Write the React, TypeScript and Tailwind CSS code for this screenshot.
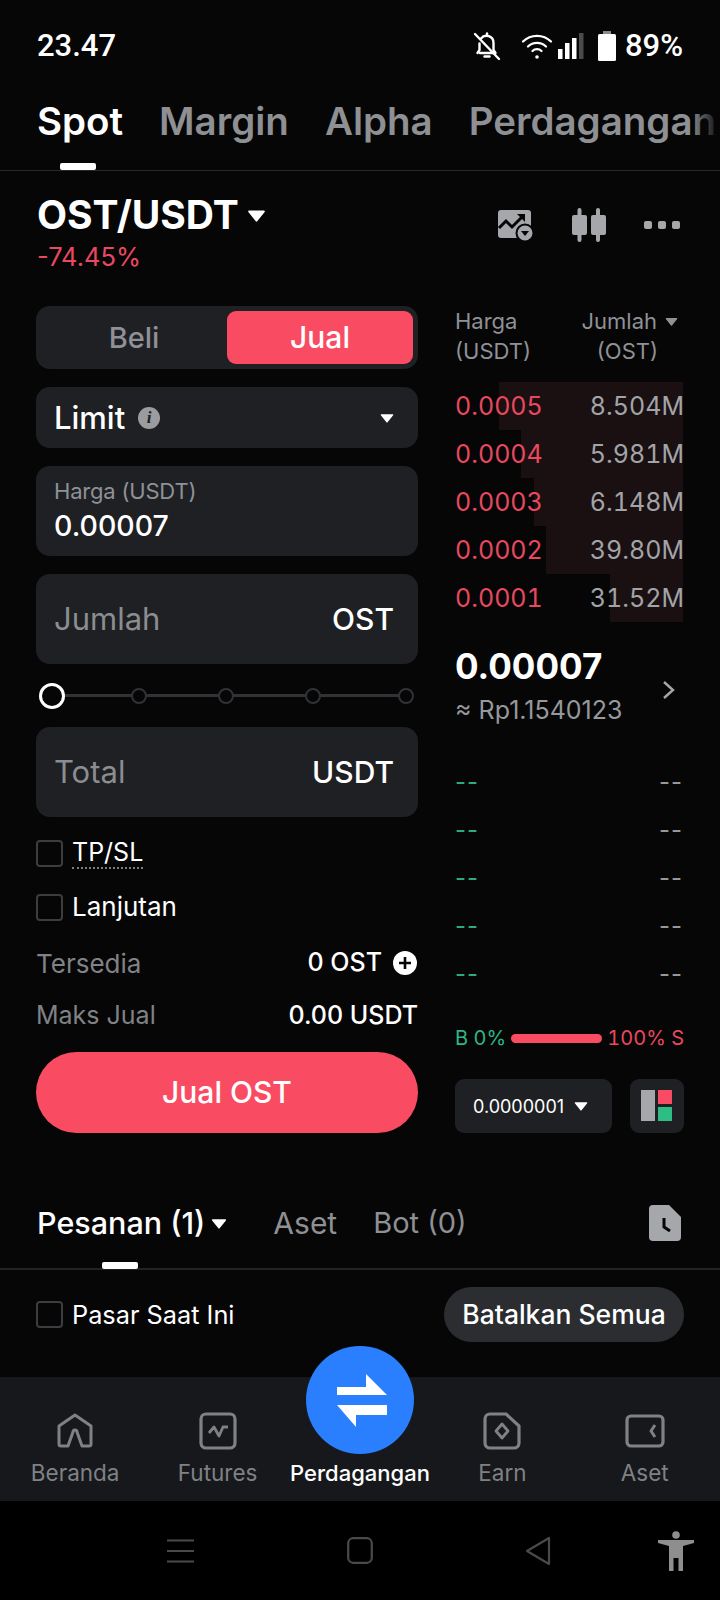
import React from "react";

const Caret = ({ className }: { className: string }) => (
  <svg viewBox="0 0 20 14" className={className} fill="currentColor"><path d="M2 1.5h16a1 1 0 0 1 .8 1.6l-8 10a1 1 0 0 1-1.6 0l-8-10A1 1 0 0 1 2 1.5z" /></svg>
);

const Field = ({ label, unit }: { label: string; unit: string }) => (
  <div className="h-[90px] rounded-[14px] bg-[#1e2024] flex items-center justify-between pl-[18px] pr-6">
    <span className="text-[31px] text-[#8b8d90]">{label}</span>
    <span className="text-[30px] font-medium text-white">{unit}</span>
  </div>
);

const Check = ({ className = "" }: { className?: string }) => (
  <span className={`block w-[27px] h-[27px] rounded-[4px] border-2 border-[#3b3d41] shrink-0 ${className}`} />
);

const asks: [string, string, string][] = [
  ["0.0005", "8.504M", "w-[184px]"],
  ["0.0004", "5.981M", "w-[162px]"],
  ["0.0003", "6.148M", "w-[149px]"],
  ["0.0002", "39.80M", "w-[137px]"],
  ["0.0001", "31.52M", "w-[73px]"],
];

const NavItem = ({ label, icon, active }: { label: string; icon?: React.ReactNode; active?: boolean }) => (
  <div className="flex flex-col items-center">
    <div className="h-[40px] flex items-center justify-center">{icon}</div>
    <span className={`mt-[7px] leading-[30px] whitespace-nowrap ${active ? "text-[22px] text-white font-medium" : "text-[22.5px] text-[#7f8185]"}`}>{label}</span>
  </div>
);

export default function App() {
  return (
    <div className="relative w-[720px] h-[1600px] overflow-hidden bg-[#060607] text-white flex flex-col" style={{ fontFamily: "Inter, 'Liberation Sans', sans-serif" }}>
      {/* status bar */}
      <div className="h-[92px] shrink-0 flex items-center justify-between pl-[37px] pr-[37px]" style={{ fontFamily: "Roboto, sans-serif" }}>
        <span className="text-[31px] font-medium">23.47</span>
        <div className="flex items-center">
          <svg viewBox="0 0 30 30" className="w-[30px] h-[30px] mr-[19px]" fill="none" stroke="white" strokeWidth="2.4" strokeLinecap="round" strokeLinejoin="round">
            <path d="M9 7.5A7 7 0 0 1 21.5 12v7l2 3H8" /><path d="M7.5 12.5V19l-2 3" /><path d="M12.5 25.5h5" /><path d="M15 2.5v2" /><path d="M3 3l24 25" />
          </svg>
          <svg viewBox="0 0 32 28" className="w-[32px] h-[28px]" fill="none" stroke="white" strokeWidth="2.3" strokeLinecap="round">
            <path d="M2 9.5a20 20 0 0 1 28 0" /><path d="M7 14.5a13 13 0 0 1 18 0" /><path d="M11.5 19a6.5 6.5 0 0 1 9 0" /><circle cx="16" cy="25" r="1.8" fill="white" stroke="none" />
          </svg>
          <svg viewBox="0 0 26 28" className="w-[26px] h-[28px] ml-[5px]">
            <rect x="0" y="17" width="4.5" height="10" fill="white" /><rect x="7" y="11" width="4.5" height="16" fill="white" /><rect x="14" y="6" width="4.5" height="21" fill="white" /><rect x="21" y="1" width="4.5" height="26" fill="#4b4b4b" />
          </svg>
          <svg viewBox="0 0 18 30" className="w-[18px] h-[30px] ml-[14px]">
            <rect x="5" y="0" width="8" height="3" fill="#8a8a8a" /><rect x="0" y="3" width="18" height="27" rx="1.5" fill="white" />
          </svg>
          <span className="text-[31px] font-medium ml-[9px]">89%</span>
        </div>
      </div>

      {/* top tabs */}
      <div className="relative h-[79px] shrink-0 border-b border-[#26282b] flex items-start pl-[37px] overflow-hidden">
        <div className="flex items-center gap-[36px] h-[60px] text-[38.5px] font-semibold whitespace-nowrap">
          <span>Spot</span>
          <span className="text-[#8e9093]">Margin</span>
          <span className="text-[#8e9093]">Alpha</span>
          <span className="text-[#8e9093]">Perdagangan</span>
        </div>
        <div className="absolute left-[60px] bottom-0 w-[36px] h-[7px] rounded-[2px] bg-white" />
        <div className="absolute right-0 top-0 bottom-0 w-[30px] bg-gradient-to-r from-transparent to-[#060607]" />
      </div>

      {/* pair */}
      <div className="h-[110px] shrink-0 flex justify-between pl-[37px] pr-[40px] pt-[20px]">
        <div>
          <div className="flex items-center h-[48px]">
            <span className="text-[39px] font-bold">OST/USDT</span>
            <Caret className="w-[19px] h-[13px] ml-[8px] text-white" />
          </div>
          <div className="text-[25.5px] leading-[30px] mt-[3px] text-[#e9485f]">-74.45%</div>
        </div>
        <div className="flex items-center h-[68px] text-[#a5a7ab]">
          <svg viewBox="0 0 38 32" className="w-[38px] h-[32px]">
            <rect x="1" y="1" width="33" height="28" rx="3" fill="#a5a7ab" />
            <path d="M2 19l7-7 6 6 10-10" fill="none" stroke="#060607" strokeWidth="3" />
            <path d="M20 5h8v8z" fill="#060607" />
            <circle cx="28" cy="24" r="8.5" fill="#a5a7ab" stroke="#060607" strokeWidth="2" />
            <path d="M24 22h8l-4 5z" fill="#060607" />
          </svg>
          <svg viewBox="0 0 36 36" className="w-[36px] h-[36px] ml-[36px]" fill="#a5a7ab">
            <rect x="6.5" y="1" width="4" height="34" rx="2" /><rect x="1" y="8" width="15" height="20" rx="2" />
            <rect x="25" y="1" width="4" height="34" rx="2" /><rect x="20" y="8" width="15" height="20" rx="2" />
          </svg>
          <svg viewBox="0 0 36 8" className="w-[36px] h-[8px] ml-[37px]" fill="#a5a7ab">
            <rect x="0" y="0" width="8" height="8" rx="2" /><rect x="14" y="0" width="8" height="8" rx="2" /><rect x="28" y="0" width="8" height="8" rx="2" />
          </svg>
        </div>
      </div>

      {/* trade area */}
      <div className="h-[904px] shrink-0 flex pl-[36px] pr-[36px] pt-[25px]">
        {/* form */}
        <div className="w-[382px] shrink-0 flex flex-col">
          <div className="h-[63px] rounded-[14px] bg-[#1e2024] flex p-[5px]">
            <div className="flex-1 flex items-center justify-center text-[29px] font-medium text-[#8f9196]">Beli</div>
            <div className="w-[186px] rounded-[9px] bg-[#f94c63] flex items-center justify-center text-[30px] font-medium">Jual</div>
          </div>
          <div className="mt-[18px] h-[61px] rounded-[14px] bg-[#1e2024] flex items-center pl-[18px] pr-[24px]">
            <span className="text-[31px] font-medium pt-[2px]">Limit</span>
            <span className="ml-[13px] w-[22px] h-[22px] rounded-full bg-[#9a9ca0] flex items-center justify-center text-[17px] font-bold italic leading-none text-[#1e2024]" style={{ fontFamily: "'Liberation Serif', serif" }}>i</span>
            <Caret className="ml-auto w-[14px] h-[10px] text-white" />
          </div>
          <div className="mt-[18px] h-[90px] rounded-[14px] bg-[#1e2024] pl-[18px] pt-[11px]">
            <div className="text-[22px] tracking-[-0.2px] leading-[28px] text-[#8f9196]">Harga (USDT)</div>
            <div className="text-[28.5px] leading-[36px] mt-[3px] font-medium">0.00007</div>
          </div>
          <div className="mt-[18px]"><Field label="Jumlah" unit="OST" /></div>
          <div className="relative h-[63px] flex items-center">
            <div className="absolute left-[16px] right-[8px] h-[3px] bg-[#303236]" />
            <div className="relative w-full h-[26px]">
              <span className="absolute left-[3px] top-0 w-[26px] h-[26px] rounded-full border-[3px] border-white bg-[#060607]" />
              {["left-[95px]", "left-[182px]", "left-[269px]", "left-[362px]"].map((l) => (
                <span key={l} className={`absolute ${l} top-[5px] w-[16px] h-[16px] rounded-full border-2 border-[#303236] bg-[#060607]`} />
              ))}
            </div>
          </div>
          <Field label="Total" unit="USDT" />
          <div className="mt-[23px] h-[27px] flex items-center">
            <Check />
            <span className="ml-[9px] text-[25px] leading-[30px] border-b-2 border-dotted border-[#7d7f83] -mt-[1px]">TP/SL</span>
          </div>
          <div className="mt-[27px] h-[27px] flex items-center">
            <Check />
            <span className="ml-[9px] text-[26px] leading-[30px] -mt-[1px]">Lanjutan</span>
          </div>
          <div className="mt-[27px] h-[30px] flex items-center justify-between">
            <span className="text-[26px] text-[#808286]">Tersedia</span>
            <span className="flex items-center font-medium text-[25px]">0 OST
              <svg viewBox="0 0 24 24" className="w-[24px] h-[24px] ml-[11px] mr-[1px]"><circle cx="12" cy="12" r="12" fill="white" /><path d="M12 6v12M6 12h12" stroke="#060607" strokeWidth="2.6" /></svg>
            </span>
          </div>
          <div className="mt-[23px] h-[30px] flex items-center justify-between">
            <span className="text-[25px] text-[#808286]">Maks Jual</span>
            <span className="font-medium text-[25px]">0.00 USDT</span>
          </div>
          <div className="mt-[21px] h-[81px] rounded-full bg-[#f94c63] flex items-center justify-center text-[30px] font-medium">Jual OST</div>
        </div>

        {/* order book */}
        <div className="ml-[37px] flex-1 flex flex-col min-w-0">
          <div className="flex justify-between text-[22px] leading-[30px] text-[#8f9196] h-[76px]">
            <div>Harga<br />(USDT)</div>
            <div className="flex flex-col items-end pr-[6px]">
              <div className="flex items-center">Jumlah<Caret className="ml-[8px] w-[13px] h-[9px] text-[#8f9196]" /></div>
              <div className="pr-[20px]">(OST)</div>
            </div>
          </div>
          <div className="flex flex-col">
            {asks.map(([p, q, w]) => (
              <div key={p} className="relative h-[48px] flex items-center justify-between text-[25px] tabular-nums">
                <div className={`absolute right-[1px] inset-y-0 ${w} bg-[#1a1012]`} />
                <span className="relative text-[#e9485f] pt-[1px]">{p}</span>
                <span className="relative text-[#a2a4a8] pt-[1px]">{q}</span>
              </div>
            ))}
          </div>
          <div className="mt-[22px] flex items-start justify-between h-[81px]">
            <div>
              <div className="text-[35px] leading-[44px] font-bold">0.00007</div>
              <div className="text-[25px] leading-[30px] mt-[7px] text-[#96989c] whitespace-nowrap">≈ Rp1.1540123</div>
            </div>
            <svg viewBox="0 0 14 20" className="w-[14px] h-[20px] mr-[8px] mt-[36px]" fill="none" stroke="#a5a7ab" strokeWidth="2.4"><path d="M2 2l9 8-9 8" /></svg>
          </div>
          <div className="mt-[33px] flex flex-col">
            {[0, 1, 2, 3, 4].map((i) => (
              <div key={i} className="h-[48px] flex items-center justify-between text-[24px]">
                <span className="text-[#2fa97f] tracking-[1px]">--</span>
                <span className="text-[#96989c] tracking-[1px] pr-[1px]">--</span>
              </div>
            ))}
          </div>
          <div className="mt-[25px] h-[30px] flex items-center text-[20px] whitespace-nowrap tabular-nums">
            <span className="text-[#2fb486]">B 0%</span>
            <span className="flex-1 h-[9px] mx-[5px] rounded-full bg-[#f94c63]" />
            <span className="text-[#e9485f]">100% S</span>
          </div>
          <div className="mt-[26px] flex justify-between">
            <div className="w-[157px] h-[54px] rounded-[9px] bg-[#1e2024] flex items-center pl-[18px] text-[18px]">
              0.0000001
              <Caret className="ml-[10px] w-[14px] h-[10px] text-white" />
            </div>
            <div className="w-[54px] h-[54px] rounded-[9px] bg-[#1e2024] flex items-center justify-center">
              <svg viewBox="0 0 32 32" className="w-[32px] h-[32px]">
                <rect x="0" y="0" width="14" height="31" fill="#a5a7ab" /><rect x="17" y="0" width="14" height="14" fill="#f94c63" /><rect x="17" y="17" width="14" height="14" fill="#2ebd85" />
              </svg>
            </div>
          </div>
        </div>
      </div>

      {/* orders tabs */}
      <div className="relative h-[85px] shrink-0 border-b-2 border-[#202225] flex items-start pl-[37px] pr-[39px] pt-[16px]">
        <div className="flex items-center h-[44px]">
          <span className="font-medium text-[30.5px]">Pesanan (1)</span>
          <Caret className="ml-[6px] w-[16px] h-[11px] text-white" />
          <span className="ml-[46px] text-[30px] text-[#8e9093]">Aset</span>
          <span className="ml-[36px] text-[29px] text-[#8e9093]">Bot (0)</span>
        </div>
        <svg viewBox="0 0 32 36" className="ml-auto mt-[4px] w-[32px] h-[36px]">
          <path d="M4 0h16l12 12v20a4 4 0 0 1-4 4H4a4 4 0 0 1-4-4V4a4 4 0 0 1 4-4z" fill="#a5a7ab" />
          <path d="M15 13v9l6 4" fill="none" stroke="#060607" strokeWidth="3" />
        </svg>
        <div className="absolute left-[102px] -bottom-[1px] w-[36px] h-[7px] rounded-[2px] bg-white" />
      </div>

      {/* current-market row */}
      <div className="h-[107px] shrink-0 flex items-start justify-between pl-[36px] pr-[36px] pt-[17px]">
        <div className="flex items-center h-[55px]">
          <Check />
          <span className="ml-[9px] text-[25.3px]">Pasar Saat Ini</span>
        </div>
        <div className="w-[240px] h-[55px] rounded-full bg-[#2b2d31] flex items-center justify-center text-[26.5px] font-medium whitespace-nowrap">Batalkan Semua</div>
      </div>

      {/* tab bar */}
      <div className="relative h-[124px] shrink-0 bg-[#16181b] grid grid-cols-5 px-1 pt-[34px]">
        <NavItem label="Beranda" icon={
          <svg viewBox="0 0 36 36" className="w-[36px] h-[36px]" fill="none" stroke="#7f8185" strokeWidth="3" strokeLinejoin="round">
            <path d="M18 2L34 13v18a2 2 0 0 1-2 2h-7l-5-14a2 2 0 0 0-4 0l-5 14H4a2 2 0 0 1-2-2V13z" />
          </svg>
        } />
        <NavItem label="Futures" icon={
          <svg viewBox="0 0 38 38" className="w-[38px] h-[38px]" fill="none" stroke="#7f8185" strokeWidth="3.2" strokeLinejoin="round">
            <rect x="2" y="2" width="34" height="34" rx="5" />
            <path d="M10 21l5-6 5 9 4-9h5" strokeWidth="2.8" />
          </svg>
        } />
        <NavItem label="Perdagangan" active />
        <NavItem label="Earn" icon={
          <svg viewBox="0 0 38 38" className="w-[38px] h-[38px]" fill="none" stroke="#7f8185" strokeWidth="3.2" strokeLinejoin="round">
            <path d="M7 2h16l13 12v17a5 5 0 0 1-5 5H7a5 5 0 0 1-5-5V7a5 5 0 0 1 5-5z" />
            <path d="M19 12l6 7-6 7-6-7z" strokeWidth="2.8" />
          </svg>
        } />
        <NavItem label="Aset" icon={
          <svg viewBox="0 0 40 34" className="w-[40px] h-[34px]" fill="none" stroke="#7f8185" strokeWidth="3.2" strokeLinejoin="round">
            <rect x="2" y="2" width="36" height="30" rx="4" />
            <path d="M30 11l-4 6 4 6" strokeWidth="3" />
          </svg>
        } />
        <div className="absolute left-[306px] -top-[31px] w-[108px] h-[108px] rounded-full bg-[#2a7fff] flex items-center justify-center">
          <svg viewBox="0 0 50 53" className="w-[50px] h-[53px] ml-[3px]" fill="white">
            <path d="M0 13h29V0l21 21H0z" /><path d="M0 31h50v10H19v12z" />
          </svg>
        </div>
      </div>

      {/* system nav */}
      <div className="flex-1 bg-black flex items-center pl-[167px]">
        <svg viewBox="0 0 27 24" className="w-[27px] h-[24px]" stroke="#4a4a4a" strokeWidth="2.2">
          <path d="M0 1.5h27M0 12h27M0 22.5h27" />
        </svg>
        <svg viewBox="0 0 26 27" className="ml-[153px] w-[26px] h-[27px]" fill="none" stroke="#4a4a4a" strokeWidth="2.2">
          <rect x="1.2" y="1.2" width="23.6" height="24.6" rx="5" />
        </svg>
        <svg viewBox="0 0 26 30" className="ml-[152px] w-[26px] h-[30px]" fill="none" stroke="#4a4a4a" strokeWidth="2.2" strokeLinejoin="round">
          <path d="M24 2v26L2 15z" />
        </svg>
        <svg viewBox="0 0 36 40" className="ml-[107px] w-[36px] h-[40px]" fill="#8e8e8e">
          <circle cx="18" cy="4" r="3.8" />
          <path d="M0 9h36v3l-11 3v25h-4.5V27h-5v13H11V15L0 12z" />
        </svg>
      </div>
    </div>
  );
}
